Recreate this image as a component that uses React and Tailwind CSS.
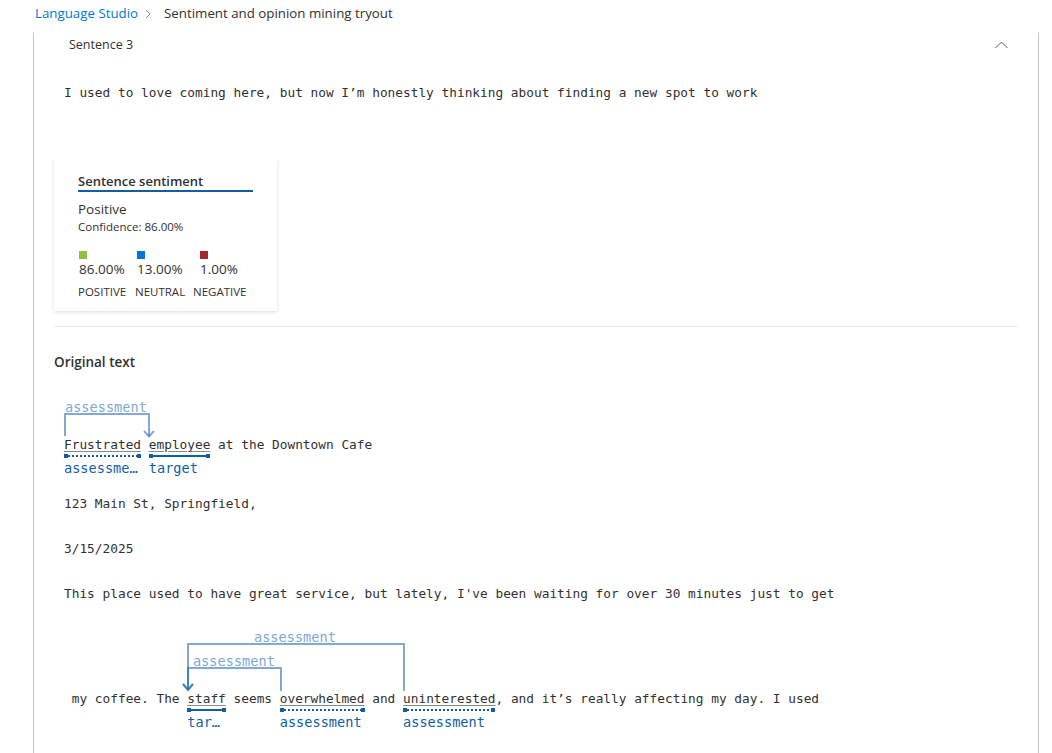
import React from 'react';

const MONO = "font-['DejaVu_Sans_Mono',monospace]";

// annotated word with underline bar and label below
const Token = ({ text, label, dotted }) => (
  <span className="flex flex-col">
    <span className="leading-[16px] whitespace-pre underline decoration-[#8a8886] underline-offset-[2px]">{text}</span>
    <span className="relative mt-[1px] flex h-[4px] items-center">
      {dotted ? (
        <span className="h-[2px] w-full bg-[linear-gradient(to_right,#0f5ea8_50%,transparent_50%)] bg-[length:4px_2px]" />
      ) : (
        <span className="h-[2px] w-full bg-[#0f5ea8]" />
      )}
      <span className="absolute left-0 top-0 h-[4px] w-[4px] bg-[#0f5ea8]" />
      <span className="absolute right-0 top-0 h-[4px] w-[4px] bg-[#0f5ea8]" />
    </span>
    <span className="mt-[1px] w-0 min-w-full overflow-hidden text-ellipsis whitespace-nowrap text-[13.6px] leading-[18px] text-[#0f5ea8]">
      {label}
    </span>
  </span>
);

const Plain = ({ children }) => <span className="leading-[16px] whitespace-pre">{children}</span>;

const ArcLabel = ({ className }) => (
  <span className={`absolute whitespace-nowrap text-[13.6px] leading-[18px] text-[#7fa9d3] ${className}`}>assessment</span>
);

const Score = ({ color, value, label, offset }) => (
  <div className="flex flex-col">
    <span className={`h-[8px] w-[8px] ${color} ${offset}`} />
    <span className={`mt-[1px] text-[13.5px] leading-[18px] ${offset}`}>{value}</span>
    <span className="mt-[6px] text-[11.5px] leading-[16px]">{label}</span>
  </div>
);

export default function App() {
  return (
    <div className="min-h-screen overflow-hidden bg-white font-['Open_Sans',sans-serif] text-[#323130]">
      {/* Breadcrumb */}
      <div className="flex h-[28px] items-center pl-[35px] text-[13.3px]">
        <span className="text-[#0078d4]">Language Studio</span>
        <svg className="ml-[7px] mr-[13px]" width="6" height="10" viewBox="0 0 6 10">
          <path d="M1 1 L5 5 L1 9" stroke="#8a8886" strokeWidth="1" fill="none" />
        </svg>
        <span>Sentiment and opinion mining tryout</span>
      </div>

      <div className="ml-[33px] mt-[5px] w-[1006px] border-x border-[#c8c6c4] pb-[60px]">
        {/* Sentence header */}
        <div className="flex h-[24px] items-center justify-between pl-[35px] pr-[30px]">
          <span className="text-[12.5px]">Sentence 3</span>
          <svg width="13" height="8" viewBox="0 0 13 8">
            <path d="M0.5 7 L6.5 1 L12.5 7" stroke="#605e5c" strokeWidth="1" fill="none" />
          </svg>
        </div>

        <div className="px-[20px]">
          <p className={`${MONO} mt-[28px] pl-[10px] text-[12.8px] leading-[16px]`}>
            I used to love coming here, but now I’m honestly thinking about finding a new spot to work
          </p>

          {/* Sentiment card */}
          <div className="mt-[57px] w-[223px] bg-white pb-[11px] pl-[24px] pt-[14px] shadow-[0_1.6px_3.6px_rgba(0,0,0,0.13),0_0.3px_0.9px_rgba(0,0,0,0.11)]">
            <div className="w-[175px] border-b-2 border-[#0f5ea8] text-[13px] font-semibold leading-[18px]">Sentence sentiment</div>
            <div className="mt-[7px] text-[13.5px] leading-[20px]">Positive</div>
            <div className="text-[11.5px] leading-[16px]">Confidence: 86.00%</div>
            <div className="mt-[16px] flex">
              <div className="w-[57px]">
                <Score color="bg-[#92c03d]" value="86.00%" label="POSITIVE" offset="ml-[1px]" />
              </div>
              <div className="w-[58px]">
                <Score color="bg-[#0078d4]" value="13.00%" label="NEUTRAL" offset="ml-[2px]" />
              </div>
              <div>
                <Score color="bg-[#a4262c]" value="1.00%" label="NEGATIVE" offset="ml-[7px]" />
              </div>
            </div>
          </div>

          <div className="mt-[15px] h-px bg-[#edebe9]" />

          <div className="mt-[25px] text-[13.5px] font-semibold leading-[20px]">Original text</div>

          <div className={`${MONO} pl-[10px] text-[12.8px]`}>
            {/* Line with opinion arcs */}
            <div className="relative mt-[26px] pt-[39px]">
              <svg className="absolute left-0 top-0 overflow-visible" width="200" height="40">
                <g stroke="#0f5ea8" strokeOpacity="0.53" strokeWidth="2" fill="none">
                  <path d="M1 38 V16 H85 V38" />
                  <path d="M80 33 L85 38.5 L90 33" />
                </g>
              </svg>
              <ArcLabel className="left-[1px] top-0" />
              <div className="flex items-start">
                <Token text="Frustrated" label="assessment" dotted />
                <Plain> </Plain>
                <Token text="employee" label="target" />
                <Plain> at the Downtown Cafe</Plain>
              </div>
            </div>

            <p className="mt-[19px] leading-[16px]">123 Main St, Springfield,</p>
            <p className="mt-[29px] leading-[16px]">3/15/2025</p>
            <p className="mt-[29px] leading-[16px]">
              This place used to have great service, but lately, I've been waiting for over 30 minutes just to get
            </p>

            <div className="relative mt-[26px] pt-[63px]">
              <svg className="absolute left-0 top-0 overflow-visible" width="400" height="64">
                <g stroke="#0f5ea8" strokeOpacity="0.53" strokeWidth="2" fill="none">
                  <path d="M124 61 V16 H340 V63" />
                  <path d="M119 56 L124 62 L129 56" />
                  <path d="M124 61 V40 H217 V63" />
                  <path d="M119 56 L124 62 L129 56" />
                </g>
              </svg>
              <ArcLabel className="left-[190px] top-0" />
              <ArcLabel className="left-[129px] top-[24px]" />
              <div className="flex items-start">
                <Plain> my coffee. The </Plain>
                <Token text="staff" label="target" />
                <Plain> seems </Plain>
                <Token text="overwhelmed" label="assessment" dotted />
                <Plain> and </Plain>
                <Token text="uninterested" label="assessment" dotted />
                <Plain>, and it’s really affecting my day. I used</Plain>
              </div>
            </div>
          </div>
        </div>
      </div>
    </div>
  );
}
